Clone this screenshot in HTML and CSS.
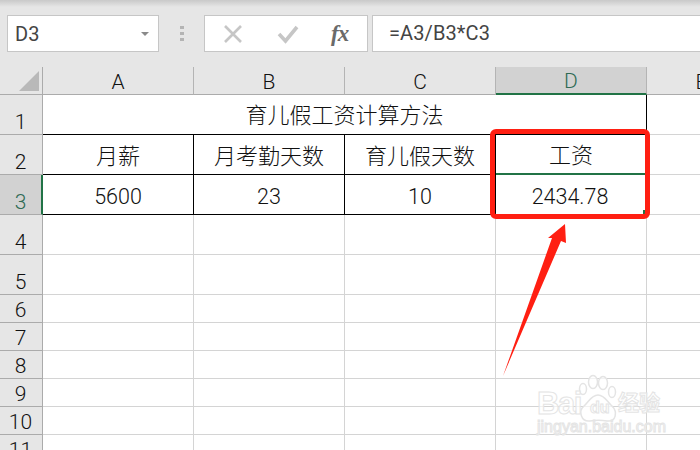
FILE: index.html
```html
<!DOCTYPE html>
<html lang="zh-CN">
<head>
<meta charset="utf-8">
<title>育儿假工资计算方法</title>
<link rel="stylesheet" href="styles.css">
</head>
<body>
<div class="app">
  <div class="toolbar">
    <div class="namebox">
      <span class="name">D3</span>
      <span class="caret"></span>
    </div>
    <div class="grip"><i></i><i></i><i></i></div>
    <div class="fxbox">
      <svg class="ico" width="22" height="20" viewBox="0 0 22 20"><path d="M3 2 L19 18 M19 2 L3 18" stroke="#c6c6c6" stroke-width="2.6" fill="none"/></svg>
      <svg class="ico" width="22" height="20" viewBox="0 0 22 20"><path d="M2 10 L8.500 17 L20 3" stroke="#c6c6c6" stroke-width="3.600" fill="none"/></svg>
      <span class="fx">fx</span>
    </div>
    <div class="formula">=A3/B3*C3</div>
  </div>
  <div class="sheet">
    <div class="corner"><span class="tri"></span></div>
    <div class="ch">A</div><div class="ch">B</div><div class="ch">C</div><div class="ch ch-sel">D</div><div class="ch">E</div>

    <div class="rh">1</div>
    <div class="c title b">育儿假工资计算方法</div>
    <div class="c"></div>

    <div class="rh">2</div>
    <div class="c b cn">月薪</div><div class="c b cn">月考勤天数</div><div class="c b cn">育儿假天数</div><div class="c b cn cd">工资</div><div class="c"></div>

    <div class="rh rh-sel">3</div>
    <div class="c b num a3">5600</div><div class="c b num">23</div><div class="c b num">10</div><div class="c b num sel">2434.78</div><div class="c"></div>

    <div class="rh">4</div><div class="c"></div><div class="c"></div><div class="c"></div><div class="c"></div><div class="c"></div>
    <div class="rh">5</div><div class="c"></div><div class="c"></div><div class="c"></div><div class="c"></div><div class="c"></div>
    <div class="rh">6</div><div class="c"></div><div class="c"></div><div class="c"></div><div class="c"></div><div class="c"></div>
    <div class="rh">7</div><div class="c"></div><div class="c"></div><div class="c"></div><div class="c"></div><div class="c"></div>
    <div class="rh">8</div><div class="c"></div><div class="c"></div><div class="c"></div><div class="c"></div><div class="c"></div>
    <div class="rh">9</div><div class="c"></div><div class="c"></div><div class="c"></div><div class="c"></div><div class="c"></div>
    <div class="rh">10</div><div class="c"></div><div class="c"></div><div class="c"></div><div class="c"></div><div class="c"></div>
    <div class="rh">11</div><div class="c"></div><div class="c"></div><div class="c"></div><div class="c"></div><div class="c"></div>
  </div>

  <div class="redbox"></div>
  <svg class="arrow" width="700" height="450" viewBox="0 0 700 450"><polygon points="503,376 552,238 548,238 565,224 566,243 561,241" fill="#ff1f12"/></svg>

  <div class="wm">
    <svg class="paw" width="48" height="52" viewBox="0 0 48 52">
      <g fill="#fff" fill-opacity="0.7" stroke="#e4e4e4" stroke-width="1.500">
        <ellipse cx="8" cy="15" rx="3.500" ry="5.500"/>
        <ellipse cx="18" cy="8" rx="4.500" ry="6.500"/>
        <ellipse cx="28" cy="9" rx="4.500" ry="6.500"/>
        <ellipse cx="37" cy="18" rx="3.500" ry="5.500"/>
        <path d="M23 21 C16 21 14 28 9 32 C3 37 6 48 15 47 C20 46 27 46 32 47 C41 48 43 38 37 32 C32 28 30 21 23 21Z"/>
      </g>
    </svg>
    <span class="wm-bai">Bai</span>
    <span class="wm-du">du</span>
    <span class="wm-jy">经验</span>
    <span class="wm-url">jingyan.baidu.com</span>
  </div>
</div>
</body>
</html>
```
FILE: styles.css
```css
* { box-sizing: border-box; }
html, body { margin: 0; padding: 0; background: #fff; }
body { width: 700px; height: 450px; overflow: hidden; font-family: Roboto, "Noto Sans CJK SC", sans-serif; font-weight: 300; color: #222; }
.app { position: relative; width: 700px; height: 450px; overflow: hidden; }

.toolbar {
  height: 67px; padding: 15px 0 15px 7px; display: flex; align-items: stretch;
  background: linear-gradient(#c9c9c9, #e6e6e6 7px);
}
.namebox {
  width: 152px; display: flex; align-items: center; justify-content: space-between;
  padding: 0 9px 0 7px; background: #fff; border: 1px solid #c6c6c6;
}
.name { font-size: 20px; font-weight: 400; color: #444; }
.caret { width: 0; height: 0; border-left: 4px solid transparent; border-right: 4px solid transparent; border-top: 4px solid #8a8a8a; }
.grip { width: 45px; display: flex; flex-direction: column; align-items: center; justify-content: center; gap: 3px; }
.grip i { width: 4px; height: 3px; background: #b4b4b4; display: block; }
.fxbox {
  width: 164px; display: flex; align-items: center; padding: 0 8px 0 17px; gap: 33px;
  background: #fff; border: 1px solid #c6c6c6;
}
.ico { flex: none; }
.fx { font-family: "Liberation Serif", serif; font-style: italic; font-weight: 700; font-size: 23px; color: #6a6a6a; margin-left: -1px; letter-spacing: -1px; }
.formula {
  flex: 1; margin-left: 4px; padding: 3px 0 0 16px; background: #fff; border: 1px solid #c6c6c6; border-right: 0;
  font-size: 20px; font-weight: 400; letter-spacing: 0.100px; line-height: 28px; color: #444;
}

.sheet {
  display: grid;
  grid-template-columns: 43px 151px 151px 151px 151px 110px;
  grid-template-rows: 28px 40px 40px 40px 40px 40px 28px 28px 28px 28px 28px 28px;
}
.corner { background: #e6e6e6; border-right: 1px solid #ababab; border-bottom: 1px solid #ababab; position: relative; }
.tri { position: absolute; right: 3px; bottom: 3px; width: 20px; height: 20px; background: #b9b9b9; clip-path: polygon(100% 0, 100% 100%, 0 100%); }
.ch {
  background: #e6e6e6; border-right: 1px solid #b4b4b4; border-bottom: 1px solid #ababab;
  display: flex; align-items: center; justify-content: center; font-size: 21px; color: #111; padding-top: 2px;
}
.ch-sel { background: #d2d2d2; border-bottom: 2px solid #217346; color: #2f6b55; }
.rh {
  background: #e6e6e6; border-right: 1px solid #ababab; border-bottom: 1px solid #ababab;
  display: flex; align-items: flex-end; justify-content: center; font-size: 21px; line-height: 23px; color: #111; padding-right: 1px;
}
.rh-sel { background: #d2d2d2; border-right: 2px solid #217346; color: #2f6b55; padding-right: 0; }

.c { border-right: 1px solid #d4d4d4; border-bottom: 1px solid #d4d4d4; display: flex; align-items: flex-end; justify-content: center; }
.b { border-right-color: #000; border-bottom-color: #000; }
.title { grid-column: span 4; font-size: 22px; line-height: 30px; padding-bottom: 3px; color: #111; }
.cn { font-size: 22px; line-height: 30px; padding-bottom: 2px; color: #111; }
.cd { border-bottom: 2px solid #217346; }
.num { font-size: 21.500px; line-height: 28px; padding-bottom: 3px; color: #111; }
.sel { border-right: 0; padding-right: 3px; position: relative; }
.sel::after { content: ""; position: absolute; right: 0; bottom: 0; width: 4px; height: 4px; background: #217346; }

.redbox { position: absolute; left: 490px; top: 129px; width: 160px; height: 90px; border: 5px solid #ff1f12; border-radius: 6px; }
.arrow { position: absolute; left: 0; top: 0; }

.wm { position: absolute; left: 530px; top: 370px; width: 140px; height: 70px; color: rgba(255,255,255,0.7); font-family: "Liberation Sans", "Noto Sans CJK SC", sans-serif; }
.paw { position: absolute; left: 45px; top: 4px; }
.wm span { position: absolute; -webkit-text-stroke: 1px #e4e4e4; }
.wm-bai { left: 7px; top: 21px; font-size: 31px; line-height: 26px; font-weight: 700; letter-spacing: -1.500px; }
.wm-du { left: 60px; top: 28px; font-size: 16px; line-height: 20px; font-weight: 700; }
.wm-jy { left: 88px; top: 20px; font-size: 21px; line-height: 26px; font-weight: 700; }
.wm-url { left: 7px; top: 48px; font-size: 16px; line-height: 18px; font-weight: 400; white-space: nowrap; }
```
